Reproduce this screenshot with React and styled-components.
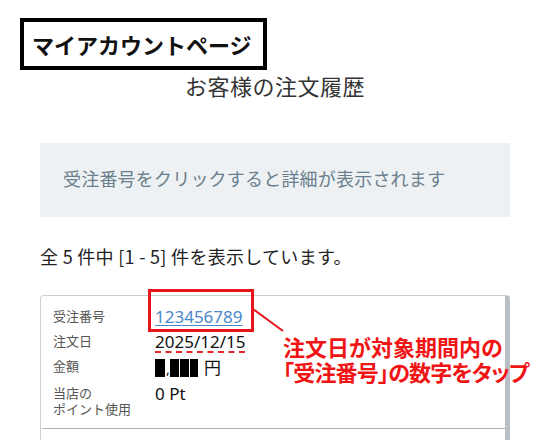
import React from "react";
import styled, { createGlobalStyle } from "styled-components";

const GlobalStyle = createGlobalStyle`
  html, body {
    margin: 0;
    padding: 0;
    overflow: hidden;
    background: #fff;
  }
  body {
    font-family: "Noto Sans CJK JP", "Noto Sans", sans-serif;
    color: #222;
  }
`;

const Page = styled.div`
  width: 550px;
  height: 440px;
  overflow: hidden;
`;

const TitleBox = styled.div`
  display: inline-block;
  margin: 18px 0 0 20px;
  border: 4px solid #000;
  padding: 0 11px 0 8px;
  height: 44px;
  line-height: 44px;
  font-size: 22px;
  font-weight: 700;
  color: #111;
`;

const Heading = styled.h2`
  margin: 0;
  text-align: center;
  font-size: 22px;
  letter-spacing: 0.5px;
  line-height: 30px;
  font-weight: 400;
  color: #333;
`;

const Content = styled.div`
  padding: 0 40px;
`;

const Notice = styled.div`
  margin-top: 43px;
  height: 74px;
  display: flex;
  align-items: center;
  padding: 0 0 5px 23px;
  box-sizing: border-box;
  background: #edf1f4;
  color: #6b7e8b;
  font-size: 18px;
  letter-spacing: 0.2px;
`;

const Count = styled.p`
  margin: 27px 0 0;
  font-size: 18px;
  letter-spacing: 0.3px;
  line-height: 24px;
  color: #222;
`;

const Card = styled.div`
  position: relative;
  margin-top: 27px;
  border: 1px solid #c9d1d7;
  border-right: 5px solid #b9c0c5;
  border-radius: 4px;
  height: 200px;
`;

const Section = styled.div`
  padding: 8px 0 11px 11px;
  border-bottom: 1px solid #aab5bd;
  margin-left: 1px;
`;

const Row = styled.div`
  display: grid;
  grid-template-columns: 102px 1fr;
  align-items: start;
  min-height: 25px;
`;

const Label = styled.div`
  font-size: 13px;
  line-height: 16px;
  padding-top: 4px;
  color: #555;
`;

const Value = styled.div`
  font-family: "Noto Sans", "Noto Sans CJK JP", sans-serif;
  font-size: 17px;
  line-height: 25px;
  color: #111;
`;

const OrderLink = styled.a`
  color: #4a88c9;
  text-decoration: underline;
  text-underline-offset: 2px;
`;

const Spell = styled.span`
  text-decoration: underline dashed #e5262b;
  text-decoration-thickness: 2px;
  text-underline-offset: 3px;
`;

const Redact = styled.span`
  display: inline-block;
  vertical-align: -3px;
  width: ${(p) => p.$w}px;
  height: 18px;
  background: #000;
  margin-right: 1px;
`;

const Comma = styled.span`
  display: inline-block;
  width: 3px;
  margin-right: 1px;
  font-size: 14px;
`;

const Yen = styled.span`
  margin-left: 5px;
  font-family: "Noto Sans CJK JP", sans-serif;
`;

const MarkBox = styled.div`
  position: absolute;
  left: 107px;
  top: -7px;
  width: 100px;
  height: 37px;
  border: 3px solid #e8141c;
`;

const Pointer = styled.svg`
  position: absolute;
  left: 210px;
  top: 12px;
  overflow: visible;
`;

const Callout = styled.div`
  position: absolute;
  left: 242px;
  top: 38px;
  white-space: nowrap;
  font-size: 22px;
  line-height: 25px;
  font-weight: 700;
  color: #f01414;
  font-feature-settings: "palt";
  z-index: 2;
`;

const CalloutLine = styled.div`
  letter-spacing: ${(p) => p.$ls || 0}px;
`;

export default function App() {
  return (
    <Page>
      <GlobalStyle />
      <TitleBox>マイアカウントページ</TitleBox>
      <Heading>お客様の注文履歴</Heading>
      <Content>
        <Notice>受注番号をクリックすると詳細が表示されます</Notice>
        <Count>全 5 件中 [1 - 5] 件を表示しています。</Count>
        <Card>
          <Section>
            <Row>
              <Label>受注番号</Label>
              <Value>
                <OrderLink href="#">123456789</OrderLink>
              </Value>
            </Row>
            <Row>
              <Label>注文日</Label>
              <Value>
                <Spell>2025/12/15</Spell>
              </Value>
            </Row>
            <Row>
              <Label>金額</Label>
              <Value>
                <Redact $w={10} />
                <Comma>,</Comma>
                <Redact $w={9} />
                <Redact $w={9} />
                <Redact $w={8} />
                <Yen>円</Yen>
              </Value>
            </Row>
            <Row>
              <Label>
                当店の
                <br />
                ポイント使用
              </Label>
              <Value>0 Pt</Value>
            </Row>
          </Section>
          <MarkBox />
          <Pointer width="32" height="24">
            <line x1="2" y1="1" x2="32" y2="23" stroke="#e8141c" strokeWidth="2" />
          </Pointer>
          <Callout>
            <CalloutLine>注文日が対象期間内の</CalloutLine>
            <CalloutLine $ls={-0.8}>「受注番号」の数字をタップ</CalloutLine>
          </Callout>
        </Card>
      </Content>
    </Page>
  );
}
